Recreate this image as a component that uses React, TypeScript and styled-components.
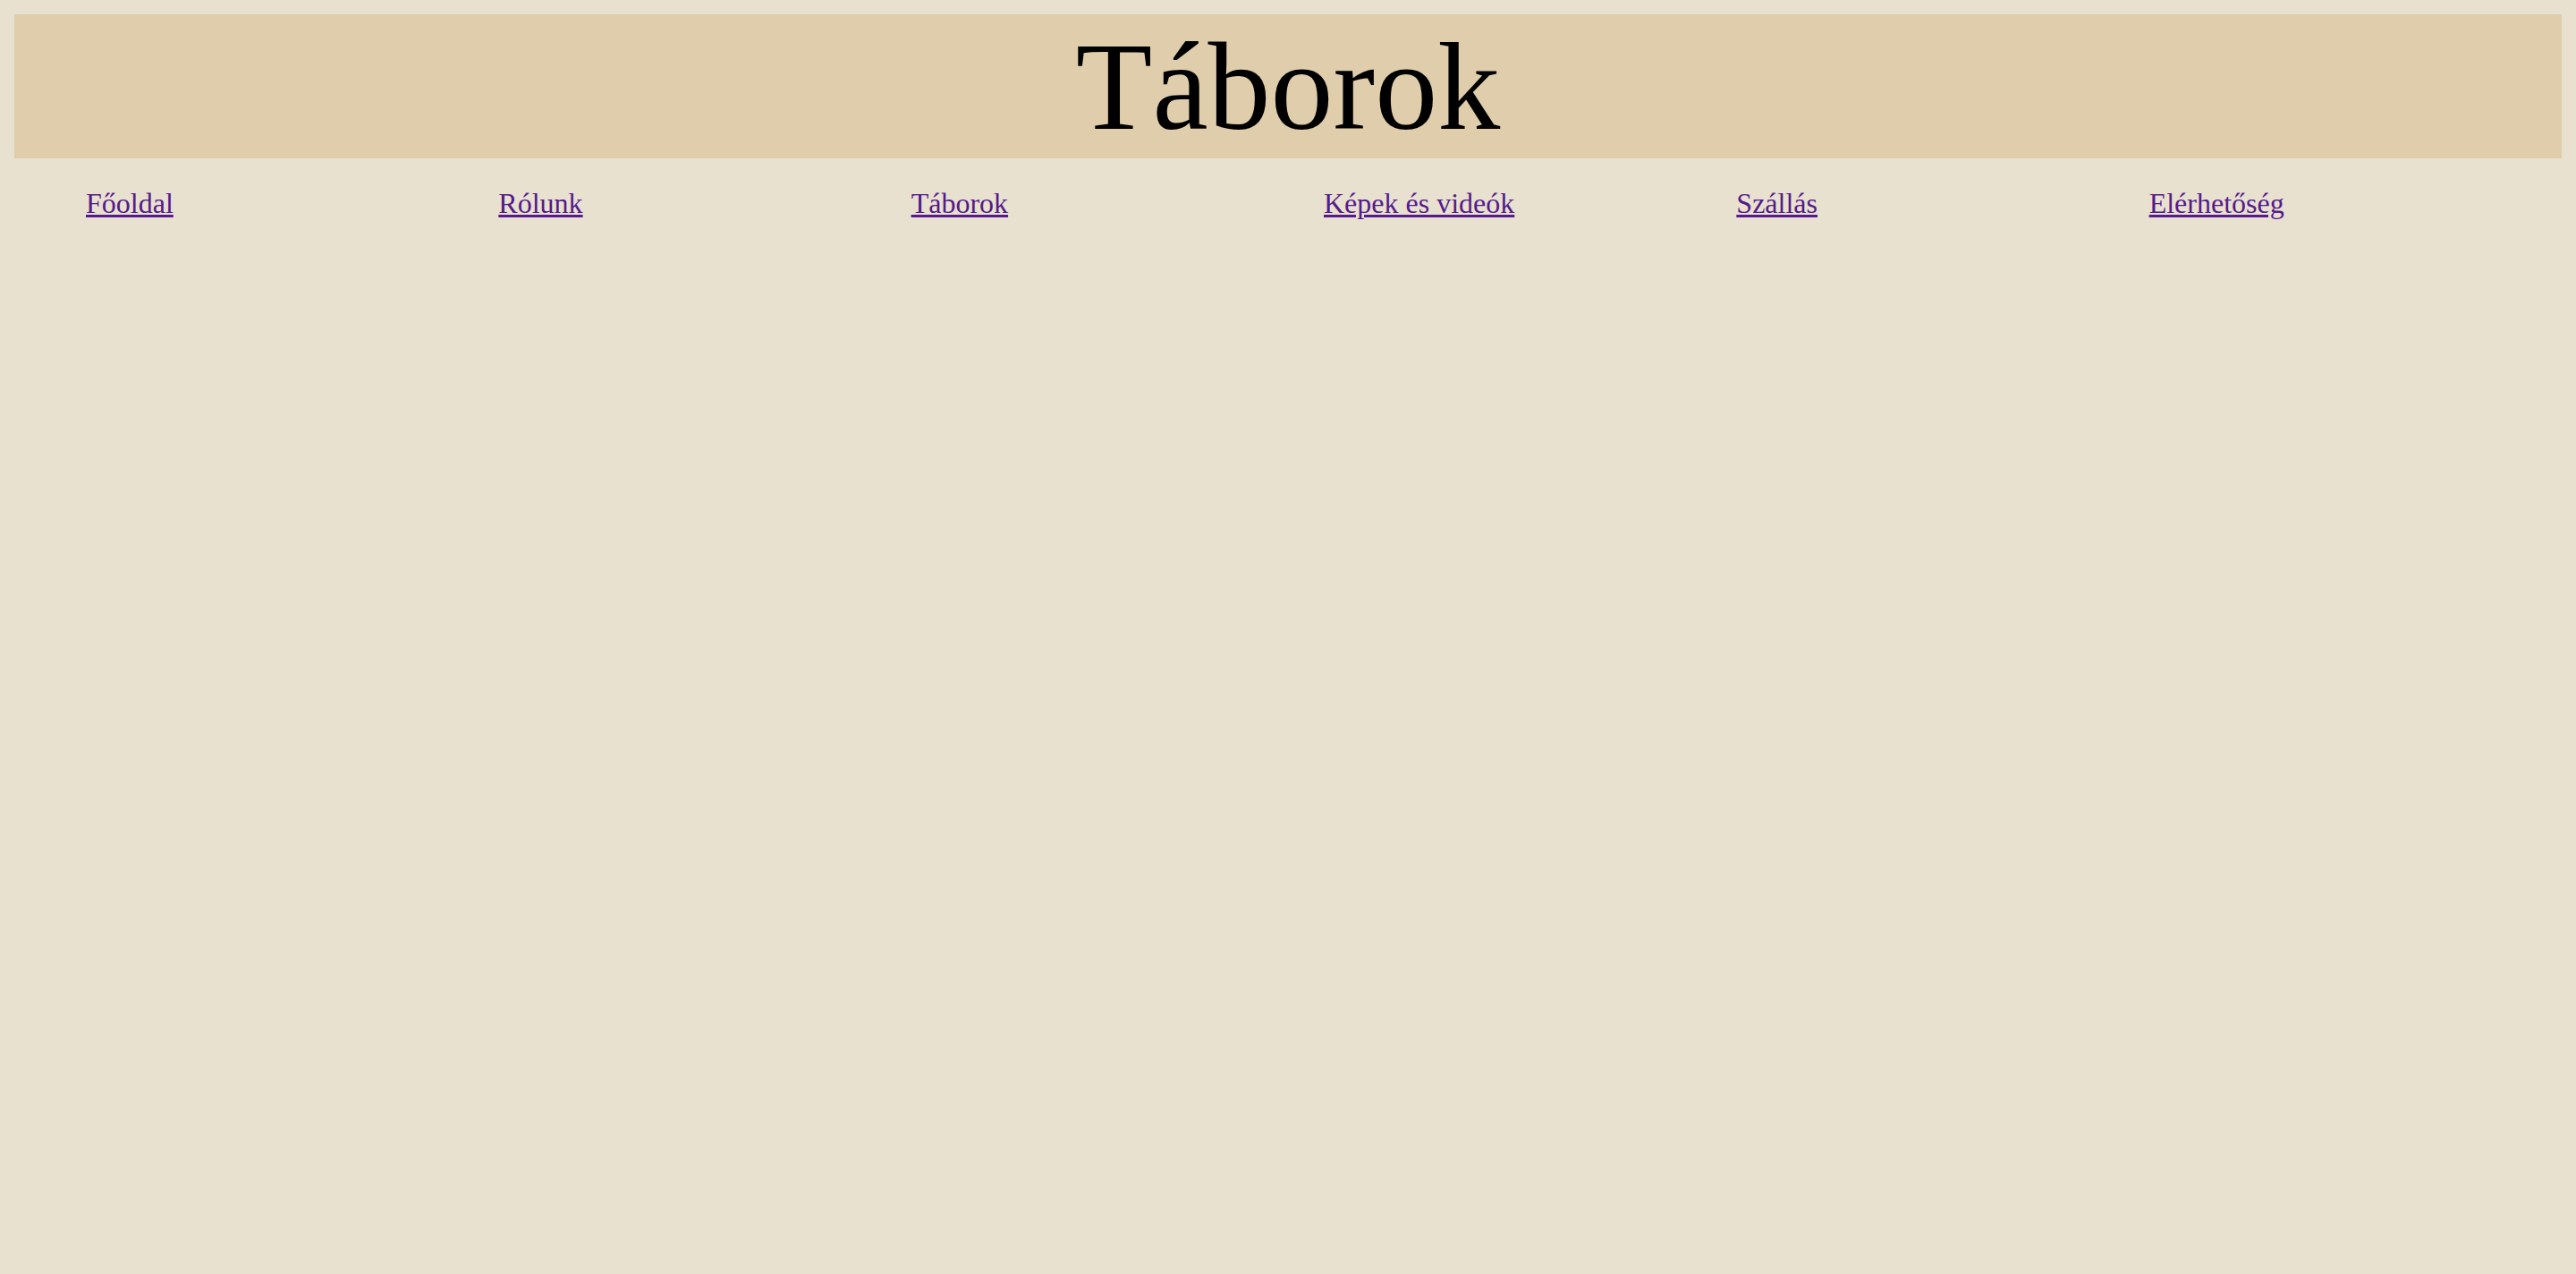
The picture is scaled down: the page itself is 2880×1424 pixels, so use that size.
import React from 'react';
import styled, { createGlobalStyle } from 'styled-components';

const GlobalStyle = createGlobalStyle`
  html, body {
    margin: 0;
    padding: 0;
    background: #e8e1cf;
  }
  body {
    font-family: 'Liberation Serif', 'Times New Roman', serif;
    min-height: 100vh;
  }
`;

const Page = styled.div`
  padding: 16px;
`;

const Banner = styled.header`
  background: #e0cdac;
`;

const Title = styled.h1`
  margin: 0;
  font-size: 140px;
  font-weight: 400;
  line-height: normal;
  text-align: center;
  color: #000;
`;

const Nav = styled.nav`
  display: grid;
  grid-template-columns: repeat(6, 1fr);
  margin-top: 32px;
  padding-left: 80px;
`;

const NavLink = styled.a`
  justify-self: start;
  font-size: 32px;
  line-height: normal;
  color: #551a8b;
  text-decoration: underline;
`;

const links = ['Főoldal', 'Rólunk', 'Táborok', 'Képek és videók', 'Szállás', 'Elérhetőség'];

export default function App(): JSX.Element {
  return (
    <>
      <GlobalStyle />
      <Page>
        <Banner>
          <Title>Táborok</Title>
        </Banner>
        <Nav>
          {links.map(label => (
            <NavLink key={label} href="#">
              {label}
            </NavLink>
          ))}
        </Nav>
      </Page>
    </>
  );
}
